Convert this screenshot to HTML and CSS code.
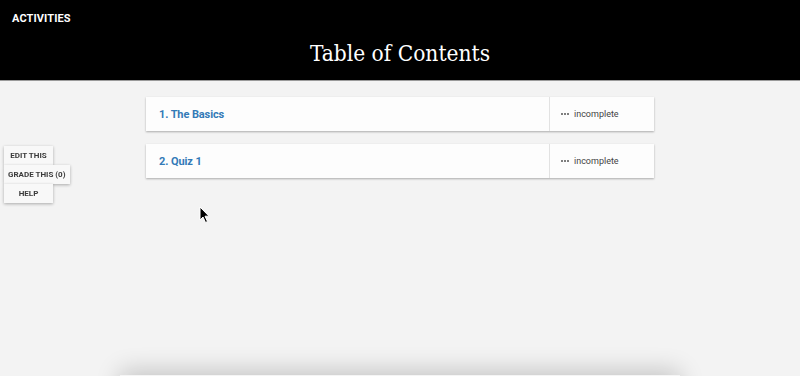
FILE: index.html
```html
<!DOCTYPE html>
<html lang="en">
<head>
    <meta charset="UTF-8">
    <meta name="viewport" content="width=device-width, initial-scale=1.0">
    <title>Table of Contents</title>
    <link rel="stylesheet" href="styles.css">
</head>
<body>
    <header class="top-bar">
        <div class="top-label">ACTIVITIES</div>
        <h1 class="page-title">Table of Contents</h1>
    </header>

    <div class="side-tools">
        <button class="tool-btn">Edit this</button>
        <button class="tool-btn">Grade this (0)</button>
        <button class="tool-btn">Help</button>
    </div>

    <main class="toc">
        <div class="toc-item">
            <a class="toc-name" href="#">1. The Basics</a>
            <div class="toc-status"><span class="dots"><i></i><i></i><i></i></span>incomplete</div>
        </div>
        <div class="toc-item">
            <a class="toc-name" href="#">2. Quiz 1</a>
            <div class="toc-status"><span class="dots"><i></i><i></i><i></i></span>incomplete</div>
        </div>
    </main>

    <div class="next-panel"></div>

    <svg class="cursor" width="12" height="18" viewBox="0 0 12 18">
        <path d="M1 1 L1 14 L4 11 L6.5 16.5 L8.5 15.5 L6 10.2 L10 10.2 Z" fill="#000" stroke="#fff" stroke-width="1"/>
    </svg>
</body>
</html>
```

FILE: styles.css
```css
body { margin: 0; background: #f3f3f3; font-family: Roboto, "Noto Sans", sans-serif; overflow: hidden; height: 376px; }
.top-bar { background: #000; color: #fff; height: 81px; border-bottom: 1px solid #9a9a9a; padding: 12px 12px 0; box-sizing: border-box; }
.top-label { font-size: 11px; font-weight: 700; letter-spacing: 0.1px; }
.page-title { margin: 15px 0 0; text-align: center; font-family: "DejaVu Serif Condensed", "DejaVu Serif", serif; font-weight: 400; font-size: 22.5px; }

.side-tools { position: fixed; left: 4px; top: 146px; display: flex; flex-direction: column; align-items: flex-start; }
.tool-btn { font-family: Roboto, sans-serif; font-size: 8px; font-weight: 700; text-transform: uppercase; color: #3a3a3a; background: #f8f8f8; border: none; height: 19px; min-width: 49px; padding: 0 4px; box-shadow: 0 1px 3px rgba(0,0,0,0.3); }

.toc { width: 508px; margin: 16px auto 0; display: flex; flex-direction: column; gap: 13px; }
.toc-item { display: flex; height: 34px; background: #fdfdfd; box-shadow: 0 1px 2px rgba(0,0,0,0.3); }
.toc-name { flex: 1; display: flex; align-items: center; padding-left: 13px; font-size: 11px; font-weight: 700; letter-spacing: -0.1px; color: #337ab7; text-decoration: none; }
.toc-status { width: 93px; border-left: 1px solid #e2e2e2; padding-left: 11px; display: flex; align-items: center; font-size: 9px; color: #444; }
.dots { display: flex; gap: 1px; margin-right: 5px; }
.dots i { width: 2px; height: 2px; border-radius: 50%; background: #555; }

.next-panel { width: 560px; height: 30px; margin: 197px auto 0; background: #f5f5f5; box-shadow: 0 -4px 24px rgba(0,0,0,0.2); }
.cursor { position: fixed; left: 199px; top: 206px; }
```
